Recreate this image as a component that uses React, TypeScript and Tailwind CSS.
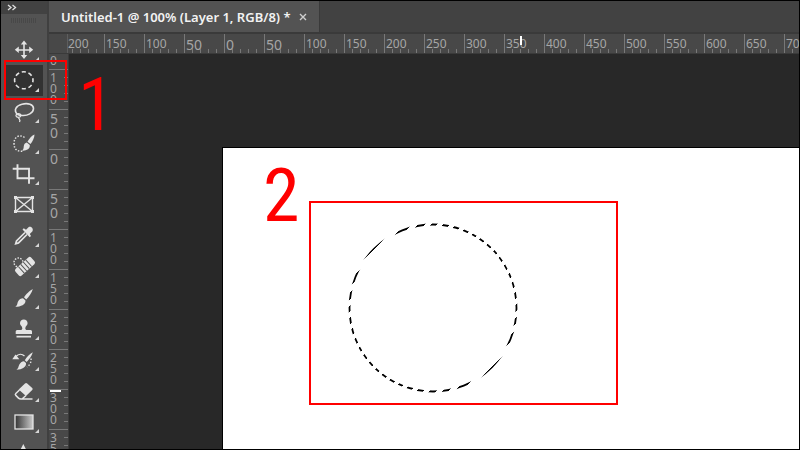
import clsx from 'clsx';
import type { ReactNode } from 'react';

interface Tool {
  name: string;
  icon: ReactNode;
  active?: boolean;
  single?: boolean;
}

const tools: Tool[] = [
  {
    name: 'Move',
    icon: (
      <>
        <path d="M12 6v14M5 13h14" strokeWidth="1.6" />
        <path d="M12 3.500l3.200 4H8.800zM12 22l3.200-4H8.800zM2.800 12.800l4-3.200v6.400zM21.200 12.800l-4-3.200v6.400z" fill="currentColor" stroke="none" />
      </>
    ),
  },
  {
    name: 'Elliptical Marquee',
    active: true,
    icon: <ellipse cx="11.800" cy="12.300" rx="9.200" ry="8.500" strokeWidth="1.600" pathLength="80" strokeDasharray="6 4" strokeDashoffset="3" />,
  },
  {
    name: 'Lasso',
    icon: (
      <>
        <path d="M5.500 15.500C1 11 4.500 6.500 10 5.200c6-1.500 11.500.3 11.500 4.300 0 4.500-6 7.500-11.500 7-2-.2-3.500-.6-4.500-1" strokeWidth="1.600" />
        <path d="M8.800 16.200c-.5-2-4.500-2-4.800.2-.2 2.400 4.500 2.800 4.800-.2zM6.500 18.500c.3 1.500 2.500 2 1 4.500" strokeWidth="1.300" />
      </>
    ),
  },
  {
    name: 'Quick Selection',
    icon: (
      <>
        <path d="M12.500 7.500C9 4.500 2 5.500 2 13.500c0 7 5 8.500 9.500 7.500" strokeWidth="1.500" strokeDasharray="1.500 1.500" />
        <path d="M22.500 4.500c-2.500 1-5.500 4.200-7 7.200l3 2.300c2-2.500 4-6.500 4-9.500zM14.800 12.600l3 2.400c.5 4-3.800 6-7.800 5.600 2-1.500 1.500-3 1.800-4.600.4-2 1.500-3 3-3.400z" fill="currentColor" stroke="none" />
      </>
    ),
  },
  {
    name: 'Crop',
    icon: <path d="M5.500 3.300v14h17M.7 7.700H17v15" strokeWidth="1.900" />,
  },
  {
    name: 'Frame',
    single: true,
    icon: (
      <>
        <path d="M3.500 5.500h17v14h-17zM3.500 5.500l17 14M20.500 5.500l-17 14" strokeWidth="1.400" />
        <path d="M2 4h3v3H2zM19 4h3v3h-3zM2 18h3v3H2zM19 18h3v3h-3z" fill="currentColor" stroke="none" />
      </>
    ),
  },
  {
    name: 'Eyedropper',
    icon: (
      <>
        <path d="M13 9.500L4.500 18l-.8 2.700 2.800-.8L15 11.500" strokeWidth="1.700" />
        <path d="M10.500 6.500l1.300-1.200 2.200 1.500 2.500-2.500c1.500-1.600 5.600.8 4 4L17.800 11l1.200 2-1.300 1.300z" fill="currentColor" stroke="none" />
      </>
    ),
  },
  {
    name: 'Spot Healing Brush',
    icon: (
      <>
        <circle cx="6.500" cy="8.500" r="4.500" strokeWidth="1.400" strokeDasharray="1.500 1.300" />
        <g transform="rotate(-42 13 12.500)">
          <rect x="2.500" y="8" width="21" height="9" rx="2" fill="currentColor" stroke="none" />
          <path d="M8 8v9M11.300 8v9M14.700 8v9M18 8v9" stroke="#535353" strokeWidth="1" />
        </g>
      </>
    ),
  },
  {
    name: 'Brush',
    icon: (
      <path d="M20.800 4c-3 1.500-7 5.500-8.800 8.300l2.200 2.200C17 11.800 20 7.500 20.800 4zM11 13.200l2.500 2.300c.2 4-4.500 6.300-10.300 6.300 2.600-1.500 1.800-3.300 3-5.500 1-1.900 2.800-3 4.800-3.100z" fill="currentColor" stroke="none" />
    ),
  },
  {
    name: 'Clone Stamp',
    icon: (
      <path d="M11.800 3.500c2.200 0 3.800 1.700 3.800 3.700 0 2.500-2.300 2.600-2.300 5 0 1.200.5 1.800 2 1.800h3.200c1 0 1.500.8 1.500 1.600V18H3.700v-2.400c0-.8.500-1.600 1.500-1.600h3.100c1.500 0 2-.6 2-1.800 0-2.400-2.300-2.500-2.300-5 0-2 1.600-3.700 3.800-3.700zM4.500 19.700H19v1.800H4.500z" fill="currentColor" stroke="none" />
    ),
  },
  {
    name: 'History Brush',
    icon: (
      <>
        <path d="M20.800 5.200c-3 1.500-6.500 5.300-8 8l1.900 1.700c2.500-2.500 5.300-6.300 6.100-9.700zM12 14.200l2 1.900c.5 4-3.700 6.600-9.500 6.600 2.300-1.500 1.600-3 2.700-5 1-2 2.700-3.300 4.800-3.500zM.3 12.300h7L3.500 7.500z" fill="currentColor" stroke="none" />
        <path d="M4 9.500c2.500-2.700 6-2.700 8.500-.5" strokeWidth="1.300" />
        <path d="M19 11.500c.5 4-1.500 7-4 8.500" strokeWidth="1.400" strokeDasharray="1.400 1.800" />
      </>
    ),
  },
  {
    name: 'Eraser',
    icon: (
      <>
        <path d="M13 5.500c.7-.7 1.500-.7 2.200 0l5 4.600c.6.600.6 1.300 0 1.900l-6.200 6-7.300-6.500z" fill="currentColor" stroke="none" />
        <path d="M7.500 12l-3.700 3.500c-.6.600-.6 1.300 0 1.900l2.700 2.700c.7.700 1.500.9 2.500.9h1l4-3.500M9.500 21H20.500" strokeWidth="1.500" />
      </>
    ),
  },
  {
    name: 'Gradient',
    icon: (
      <>
        <defs>
          <linearGradient id="gradient-tool">
            <stop offset="0" stopColor="#333" />
            <stop offset="1" stopColor="#ccc" />
          </linearGradient>
        </defs>
        <rect x="3" y="6" width="18" height="14" fill="url(#gradient-tool)" strokeWidth="1.300" />
      </>
    ),
  },
  {
    name: 'Pen',
    icon: <path d="M11.300 4l3.500 7v3h-7v-3z" fill="currentColor" stroke="none" />,
  },
];

interface Mark {
  label: string;
  big?: boolean;
}

const columns: Mark[] = [
  { label: '150' },
  { label: '100' },
  { label: '50', big: true },
  { label: '0', big: true },
  { label: '50', big: true },
  ...['100', '150', '200', '250', '300', '350', '400', '450', '500', '550', '600', '650', '700'].map((label) => ({ label })),
];

const rows: Mark[] = [
  { label: '100' },
  { label: '50', big: true },
  { label: '0', big: true },
  { label: '50', big: true },
  ...['100', '150', '200', '250', '300', '350'].map((label) => ({ label })),
];

function ToolButton({ tool }: { tool: Tool }) {
  return (
    <button
      type="button"
      aria-label={tool.name}
      aria-pressed={Boolean(tool.active)}
      className={clsx(
        'relative flex h-[31px] w-[38px] shrink-0 justify-center pt-[3px] text-[#e4e4e4]',
        tool.active && 'bg-[#323232]'
      )}
    >
      <svg width="24" height="24" viewBox="0 0 24 24" fill="none" stroke="currentColor" aria-hidden="true">
        {tool.icon}
      </svg>
      {!tool.single && (
        <svg className="absolute right-1 bottom-1 size-1" viewBox="0 0 4 4" aria-hidden="true">
          <path d="M4 0v4H0z" fill="#d6d6d6" />
        </svg>
      )}
    </button>
  );
}

function Toolbar() {
  return (
    <aside className="flex w-[48px] shrink-0 flex-col overflow-hidden border-r-2 border-[#404040] bg-[#535353]">
      <button type="button" aria-label="Expand tools" className="flex h-[13px] shrink-0 items-center bg-[#424242] pl-[6px]">
        <svg width="10" height="7" viewBox="0 0 10 7" fill="none" stroke="#e0e0e0" strokeWidth="1.300">
          <path d="M1 1l3 2.500L1 6M5.500 1l3 2.500-3 2.500" />
        </svg>
      </button>
      {/* drag grip */}
      <div className="mx-[10px] mt-[4px] mb-[11px] h-[5px] shrink-0 bg-[repeating-linear-gradient(90deg,#484848_0_1px,transparent_1px_2px)]" />
      <div className="flex flex-col pl-1">
        {tools.map((tool) => (
          <ToolButton key={tool.name} tool={tool} />
        ))}
      </div>
    </aside>
  );
}

function TabBar() {
  return (
    <div className="flex h-[33px] shrink-0 border-b-2 border-[#3a3a3a] bg-[#424242]">
      <div className="flex items-center gap-2 border-r border-[#3a3a3a] bg-[#535353] px-3">
        <span className="font-['Noto_Sans','Open_Sans',sans-serif] text-[13px] leading-5 font-semibold whitespace-nowrap text-[#f2f2f2]">
          Untitled-1 @ 100% (Layer 1, RGB/8) *
        </span>
        <button type="button" aria-label="Close" className="text-[#cfcfcf]">
          <svg width="8" height="8" viewBox="0 0 8 8" fill="none" stroke="currentColor" strokeWidth="1.400">
            <path d="M1 1l6 6M7 1L1 7" />
          </svg>
        </button>
      </div>
    </div>
  );
}

function TopRuler() {
  return (
    <div className="relative flex h-5 shrink-0 overflow-hidden border-b border-[#3a3a3a] bg-[#484848] text-[#a6a6a6]">
      <div className="w-[19px] shrink-0 border-r border-[#5e5e5e]" />
      <div className="relative w-[36px] shrink-0 text-[12px] leading-5">
        200
        <div className="absolute inset-x-0 bottom-0 h-1 bg-[repeating-linear-gradient(90deg,transparent_0_4px,#787878_4px_5px,transparent_5px_8px)]" />
      </div>
      {columns.map((mark, i) => (
        <div
          key={i}
          className={clsx(
            'relative w-10 shrink-0 border-l border-[#787878] pl-px',
            mark.big ? 'text-[14px] leading-[22px]' : 'text-[12px] leading-5'
          )}
        >
          {mark.label}
          <div className="absolute inset-x-0 bottom-0 h-1 bg-[repeating-linear-gradient(90deg,transparent_0_7px,#787878_7px_8px)]" />
        </div>
      ))}
      {/* pointer position */}
      <div className="absolute top-[2px] left-[471px] h-[9px] w-[2px] bg-white" />
    </div>
  );
}

function SideRuler() {
  return (
    <div className="relative flex w-5 shrink-0 flex-col overflow-hidden border-r border-[#3a3a3a] bg-[#484848] text-[#a6a6a6]">
      <div className="h-[15px] shrink-0 pl-px text-[12px] leading-[14px]">0</div>
      {rows.map((mark, i) => (
        <div
          key={i}
          className={clsx(
            'relative h-10 shrink-0 border-t border-[#787878] pt-[2px] pl-px',
            mark.big ? 'text-[14px] leading-[14px]' : 'text-[12px] leading-[11px]'
          )}
        >
          {/* one digit per line */}
          <p className="w-2 break-all">{mark.label}</p>
          <div className="absolute inset-y-0 right-0 w-1 bg-[repeating-linear-gradient(180deg,transparent_0_7px,#787878_7px_8px)]" />
        </div>
      ))}
      <div className="absolute top-[336px] left-px h-[2px] w-[11px] bg-white" />
    </div>
  );
}

function Artboard() {
  return (
    <div className="relative min-w-0 flex-1 border-t border-l border-black bg-white">
      <span className="absolute top-[11px] left-[40px] font-['Roboto_Condensed','Roboto',sans-serif] text-[74px] leading-[74px] text-[#ff0000]">
        2
      </span>
      <div className="absolute top-[53px] left-[86px] h-[204px] w-[309px] border-2 border-[#ff0000]">
        {/* selection edge: diagonal black and white bands along the circle */}
        <svg className="absolute top-[18px] left-[35px]" width="174" height="174" viewBox="0 0 174 174" fill="none">
          <defs>
            <linearGradient id="ants" gradientUnits="userSpaceOnUse" spreadMethod="repeat" x1="44.100" y1="44.100" x2="50.450" y2="50.450">
              <stop offset="0" stopColor="#000" />
              <stop offset=".53" stopColor="#000" />
              <stop offset=".53" stopColor="#fff" />
              <stop offset="1" stopColor="#fff" />
            </linearGradient>
          </defs>
          <circle cx="87" cy="87" r="83.500" stroke="url(#ants)" strokeWidth="1.800" />
        </svg>
      </div>
    </div>
  );
}

export default function App() {
  return (
    <div className="relative flex h-screen overflow-hidden border border-black bg-[#282828] font-['Noto_Sans',sans-serif]">
      <Toolbar />
      <main className="flex min-w-0 flex-1 flex-col">
        <TabBar />
        <TopRuler />
        <div className="flex min-h-0 flex-1">
          <SideRuler />
          <div className="flex min-w-0 flex-1 pt-[93px] pl-[153px]">
            <Artboard />
          </div>
        </div>
      </main>

      {/* first step marker */}
      <div className="absolute top-[59px] left-[3px] h-[40px] w-[63px] border-2 border-[#ff0000]" />
      <span className="absolute top-[67px] left-[77px] font-['Roboto_Condensed','Roboto',sans-serif] text-[74px] leading-[74px] text-[#ff0000]">
        1
      </span>
    </div>
  );
}
